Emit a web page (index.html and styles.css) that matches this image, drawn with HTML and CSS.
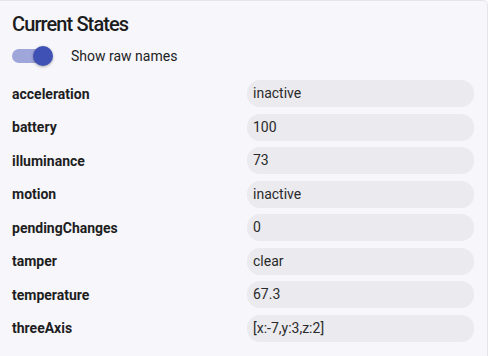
FILE: index.html
```html
<!DOCTYPE html>
<html>
<head>
  <title>Current States</title>
  <link rel="stylesheet" href="styles.css">
</head>
<body>
  <div class="card">
    <h2 class="title">Current States</h2>
    <label class="switch-row">
      <span class="switch">
        <span class="track"></span>
        <span class="thumb"></span>
      </span>
      <span class="switch-label">Show raw names</span>
    </label>
    <div class="states">
      <div class="name">acceleration</div>
      <div class="value">inactive</div>
      <div class="name">battery</div>
      <div class="value">100</div>
      <div class="name">illuminance</div>
      <div class="value">73</div>
      <div class="name">motion</div>
      <div class="value">inactive</div>
      <div class="name">pendingChanges</div>
      <div class="value">0</div>
      <div class="name">tamper</div>
      <div class="value">clear</div>
      <div class="name">temperature</div>
      <div class="value">67.3</div>
      <div class="name">threeAxis</div>
      <div class="value">[x:-7,y:3,z:2]</div>
    </div>
  </div>
</body>
</html>
```

FILE: styles.css
```css
body {
  margin: 0;
  background: #ffffff;
  font-family: Roboto, "Noto Sans", sans-serif;
  color: #222;
}

.card {
  box-sizing: border-box;
  width: 489px;
  height: 356px;
  padding: 0 13px 0 13px;
  margin-left: -1px;
  background: #f6f6fb;
  border-top: 1px solid #e4e4ea;
  border-right: 1px solid #e4e4ea;
  border-top-right-radius: 5px;
}

.title {
  margin: 0;
  padding-top: 11px;
  font-size: 20px;
  font-weight: 500;
  line-height: 24px;
  letter-spacing: -0.9px;
  color: #1c1c1c;
}

.switch-row {
  display: flex;
  align-items: center;
  height: 24px;
  margin-top: 8px;
}

.switch {
  position: relative;
  width: 44px;
  height: 24px;
  flex: none;
}

.track {
  position: absolute;
  left: 0;
  top: 5px;
  width: 36px;
  height: 14px;
  border-radius: 7px;
  background: #9fa7da;
}

.thumb {
  position: absolute;
  left: 21px;
  top: 2px;
  width: 20px;
  height: 20px;
  border-radius: 50%;
  background: #3f51b5;
  box-shadow: 0 1px 3px rgba(0, 0, 0, 0.3);
}

.switch-label {
  margin-left: 15px;
  font-size: 14px;
  color: #222;
}

.states {
  display: grid;
  grid-template-columns: 1fr 227px;
  column-gap: 8px;
  row-gap: 6.5px;
  margin-top: 12px;
  align-items: center;
}

.name {
  font-size: 14px;
  font-weight: 700;
  color: #1e1e1e;
}

.value {
  height: 27px;
  line-height: 27px;
  padding: 0 6px;
  border-radius: 13px;
  background: #eaeaef;
  font-size: 14px;
  color: #2a2a2a;
}
```
